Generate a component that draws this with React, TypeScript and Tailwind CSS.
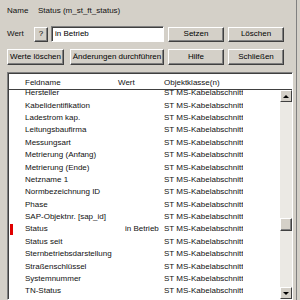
import React from 'react';

const rows: { name: string; wert?: string; marked?: boolean }[] = [
  { name: 'Hersteller' },
  { name: 'Kabelidentifikation' },
  { name: 'Ladestrom kap.' },
  { name: 'Leitungsbaufirma' },
  { name: 'Messungsart' },
  { name: 'Metrierung (Anfang)' },
  { name: 'Metrierung (Ende)' },
  { name: 'Netzname 1' },
  { name: 'Normbezeichnung ID' },
  { name: 'Phase' },
  { name: 'SAP-Objektnr. [sap_id]' },
  { name: 'Status', wert: 'in Betrieb', marked: true },
  { name: 'Status seit' },
  { name: 'Sternbetriebsdarstellung' },
  { name: 'Straßenschlüssel' },
  { name: 'Systemnummer' },
  { name: 'TN-Status' },
  { name: 'Trafoort' },
];

const btn =
  'flex items-center justify-center border border-t-white border-l-white border-r-[#404040] border-b-[#404040] shadow-[inset_-1px_-1px_0_#808080] bg-[#d4d0c8] text-black';

function Button({ label, className }: { label: string; className: string }) {
  return <div className={`${btn} ${className}`}>{label}</div>;
}

export default function App() {
  return (
    <div
      className="w-[300px] h-[300px] overflow-hidden bg-[#d4d0c8] text-[8px] leading-none text-[#111]"
      style={{ fontFamily: '"Liberation Sans", Arial, sans-serif' }}
    >
      <div className="w-[297px] h-full border-r border-[#808080] flex flex-col">
        {/* Name */}
        <div className="flex items-center h-[20px] pl-[7px] pt-[1px]">
          <span className="w-[31px]">Name</span>
          <span>Status (m_st_ft_status)</span>
        </div>

        {/* Wert */}
        <div className="flex items-center h-[16px] mt-[6px] pl-[7px]">
          <span className="w-[27px]">Wert</span>
          <Button label="?" className="w-[14px] h-[15px]" />
          <div className="ml-[3px] w-[113px] h-[16px] bg-white border border-t-[#808080] border-l-[#808080] border-b-white border-r-white shadow-[inset_1px_1px_0_#404040] flex items-center pl-[3px] text-black">
            in Betrieb
          </div>
          <Button label="Setzen" className="ml-[4px] w-[56px] h-[15px]" />
          <Button label="Löschen" className="ml-[4px] w-[56px] h-[15px]" />
        </div>

        {/* Buttons */}
        <div className="flex items-center h-[16px] mt-[7px] pl-[7px]">
          <Button label="Werte löschen" className="w-[57px] h-[16px]" />
          <Button label="Änderungen durchführen" className="ml-[6px] w-[94px] h-[16px]" />
          <Button label="Hilfe" className="ml-[4px] w-[56px] h-[16px]" />
          <Button label="Schließen" className="ml-[4px] w-[56px] h-[16px]" />
        </div>

        {/* List */}
        <div className="ml-[7px] mt-[7px] w-[286px] flex-1 border border-t-[#808080] border-l-[#808080] border-b-white border-r-white shadow-[inset_1px_1px_0_#404040] bg-white flex flex-col overflow-hidden">
          <div className="flex h-[16px] items-center pt-[3px] border-b border-[#404040] ml-[1px] mt-[1px] shrink-0 bg-white">
            <span className="pl-[16px] w-[109px]">Feldname</span>
            <span className="w-[46px]">Wert</span>
            <span>Objektklasse(n)</span>
          </div>
          <div className="flex flex-1 min-h-0 ml-[1px]">
            <div className="flex-1 overflow-hidden">
              <div className="-mt-[3px]">
                {rows.map((r) => (
                  <div key={r.name} className="flex h-[12.4px] items-center">
                    <div className="w-[16px] flex justify-start pl-[1px]">
                      {r.marked && <div className="w-[3px] h-[11px] bg-[#e00000]" />}
                    </div>
                    <span className="w-[100px] whitespace-nowrap">{r.name}</span>
                    <span className="w-[39px] whitespace-nowrap overflow-hidden">{r.wert ?? ''}</span>
                    <span className="w-[79px] whitespace-nowrap overflow-hidden">ST MS-Kabelabschnitt</span>
                  </div>
                ))}
              </div>
            </div>
            {/* Scrollbar */}
            <div className="w-[12px] flex flex-col bg-[#ebe9e4]">
              <div className="h-[12px] flex items-center justify-center border border-t-white border-l-white border-r-[#404040] border-b-[#404040] bg-[#d4d0c8]">
                <div className="w-0 h-0 border-l-[3px] border-r-[3px] border-b-[3px] border-l-transparent border-r-transparent border-b-black" />
              </div>
              <div className="h-[116px]" />
              <div className="h-[13px] border border-t-white border-l-white border-r-[#404040] border-b-[#404040] shadow-[inset_-1px_-1px_0_#808080] bg-[#d4d0c8]" />
              <div className="flex-1" />
              <div className="h-[12px] flex items-center justify-center border border-t-white border-l-white border-r-[#404040] border-b-[#404040] bg-[#d4d0c8]">
                <div className="w-0 h-0 border-l-[3px] border-r-[3px] border-t-[3px] border-l-transparent border-r-transparent border-t-black" />
              </div>
            </div>
          </div>
        </div>
      </div>
    </div>
  );
}
